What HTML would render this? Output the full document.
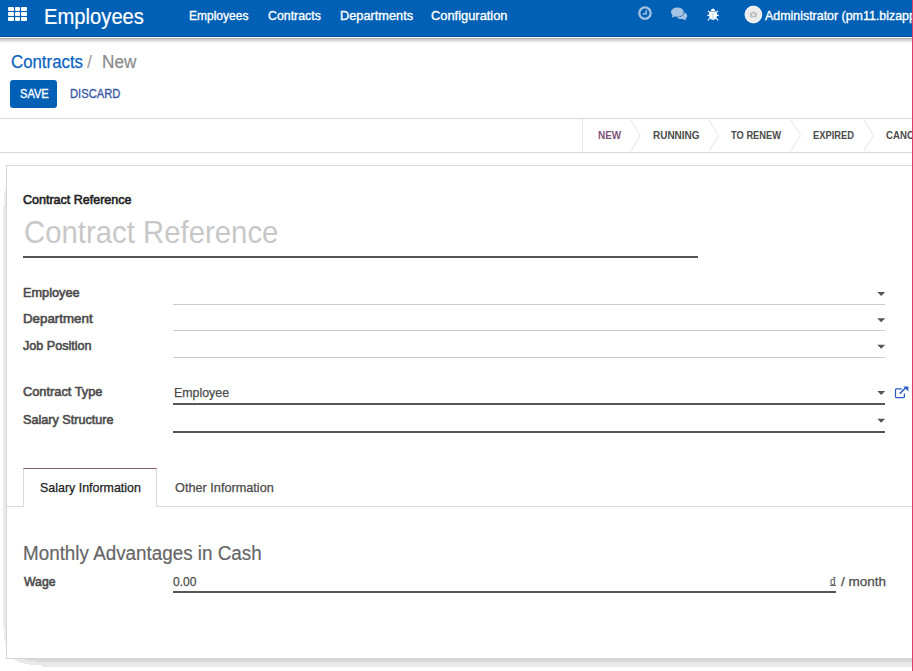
<!DOCTYPE html>
<html><head><meta charset="utf-8">
<style>
html,body{margin:0;padding:0;width:913px;height:671px;overflow:hidden;background:#fff;position:relative;font-family:"Liberation Sans",sans-serif}
.a{position:absolute}
.t{position:absolute;line-height:1;white-space:nowrap;transform-origin:0 0}
.grid i{position:absolute;width:5.5px;height:4.2px;background:#fff;border-radius:1px}
</style></head><body>
<!-- navbar -->
<div class="a" style="left:0;top:0;width:913px;height:36px;background:#0060b6"></div>
<div class="a" style="left:0;top:36px;width:913px;height:1px;background:#0052a6"></div>
<div class="a" style="left:0;top:37px;width:913px;height:1px;background:#fbfaf8"></div>
<div class="a" style="left:0;top:38px;width:913px;height:1px;background:#b3b3b3"></div>
<div class="a" style="left:0;top:39px;width:913px;height:1px;background:#cecece"></div>
<div class="a" style="left:0;top:40px;width:913px;height:1px;background:#d9d9d9"></div>
<div class="a" style="left:0;top:41px;width:913px;height:1px;background:#e8e8e8"></div>
<div class="a" style="left:0;top:42px;width:913px;height:1px;background:#f6f6f6"></div>
<div class="a grid" style="left:0;top:0">
<i style="left:8px;top:6.7px"></i><i style="left:14.6px;top:6.7px"></i><i style="left:21.1px;top:6.7px"></i>
<i style="left:8px;top:11.8px"></i><i style="left:14.6px;top:11.8px"></i><i style="left:21.1px;top:11.8px"></i>
<i style="left:8px;top:16.9px"></i><i style="left:14.6px;top:16.9px"></i><i style="left:21.1px;top:16.9px"></i>
</div>
<svg class="a" style="left:0;top:0" width="913" height="36" viewBox="0 0 913 36">
 <!-- clock -->
 <circle cx="645" cy="13.1" r="5.7" fill="none" stroke="#a6c2e2" stroke-width="2.3"/>
 <path d="M646.2 9.9 V13.8 H642.8" fill="none" stroke="#a6c2e2" stroke-width="1.5"/>
 <!-- chat -->
 <path d="M680 11.6 C684.5 11.8 687.5 14 687.2 16.3 C687 17.8 686 18.6 685.3 19 L686.3 20.2 C684.5 20.1 683.3 19.6 682.4 19.1 C679.6 19.1 677.5 18.4 676.8 17.2 C680.5 17.2 683.6 15.5 683.9 12.8 Z" fill="#a6c2e2"/>
 <ellipse cx="677.4" cy="12.1" rx="6.9" ry="5.2" fill="#0060b6"/>
 <ellipse cx="677.4" cy="12.1" rx="6.4" ry="4.7" fill="#a6c2e2"/>
 <path d="M672.8 14.5 L671.6 17.8 L675.8 15.9 Z" fill="#a6c2e2"/>
 <!-- bug -->
 <path d="M710.8 10.9 C711 9.3 712 8.7 713 8.7 C714 8.7 715 9.3 715.2 10.9 Z" fill="#fff"/>
 <path d="M709.9 11.6 H716.1 C716.8 12.2 717 13.2 717 15 C717 18 715.5 19.9 713 19.9 C710.5 19.9 709 18 709 15 C709 13.2 709.2 12.2 709.9 11.6 Z" fill="#fff"/>
 <path d="M708 11 L709.9 12.6 M718 11 L716.1 12.6 M707.3 15.4 H709.2 M718.7 15.4 H716.8 M707.9 20.3 L709.8 18.2 M718.1 20.3 L716.2 18.2" stroke="#fff" stroke-width="1.1"/>
 <path d="M713 12.5 V19.4" stroke="#0060b6" stroke-width="0.6" opacity="0.5"/>
 <!-- avatar -->
 <circle cx="753.4" cy="14.5" r="8.4" fill="#ececec" stroke="#fff" stroke-width="0.9"/>
 <rect x="750" y="12.6" width="6.8" height="4.6" rx="0.6" fill="#bdbdbd"/>
 <rect x="752" y="11.6" width="2.6" height="1.4" fill="#bdbdbd"/>
 <circle cx="753.4" cy="14.9" r="1.3" fill="#ececec"/>
</svg>

<!-- control panel -->
<div class="a" style="left:10px;top:80px;width:47px;height:28px;background:#0060b6;border-radius:3px"></div>
<div class="a" style="left:0;top:118px;width:913px;height:1px;background:#d9d9d9"></div>
<div class="a" style="left:0;top:152px;width:913px;height:1px;background:#d9d9d9"></div>
<div class="a" style="left:582px;top:119px;width:1px;height:33px;background:#e6e6e6"></div>
<svg class="a" style="left:0;top:119px" width="913" height="33" viewBox="0 119 913 33">
 <path d="M631 120 L640 135.5 L631 151 M709 120 L718.5 135.5 L709 151 M791 120 L800.5 135.5 L791 151 M864 120 L873.5 135.5 L864 151" fill="none" stroke="#e6e6e6" stroke-width="1"/>
</svg>

<!-- sheet -->
<div class="a" style="left:3px;top:206px;width:3px;height:421px;background:#e9e9e9"></div>
<div class="a" style="left:4px;top:192px;width:2px;height:14px;background:#ececec"></div>
<div class="a" style="left:5px;top:188px;width:1px;height:4px;background:#efefef"></div>
<div class="a" style="left:4px;top:627px;width:2px;height:13px;background:#ececec"></div>
<div class="a" style="left:5px;top:640px;width:1px;height:5px;background:#efefef"></div>
<svg class="a" style="left:0;top:650px" width="913" height="21" viewBox="0 650 913 21">
 <polygon points="14,659 912,659 912,667 42,667 42,665 29,665 29,664 24,664 24,663 20,663 20,662 18,662 18,661 16,661 16,660 14,660" fill="#e9e9e9" shape-rendering="crispEdges"/>
 <polygon points="25,659 912,659 912,662 36,662 36,661 29,661 29,660 25,660" fill="#d9d9d9" shape-rendering="crispEdges"/>
</svg>
<div class="a" style="left:6px;top:165px;width:920px;height:494px;box-sizing:border-box;border:1px solid #d6d6d6;background:#fff"></div>

<div class="a" style="left:23px;top:256px;width:675px;height:2px;background:#555"></div>
<div class="a" style="left:173px;top:304px;width:712px;height:1px;background:#cbcbcb"></div>
<div class="a" style="left:173px;top:330px;width:712px;height:1px;background:#cbcbcb"></div>
<div class="a" style="left:173px;top:357px;width:712px;height:1px;background:#cbcbcb"></div>
<div class="a" style="left:173px;top:403px;width:712px;height:2px;background:#555"></div>
<div class="a" style="left:173px;top:431px;width:712px;height:2px;background:#555"></div>
<svg class="a" style="left:0;top:0" width="913" height="671" viewBox="0 0 913 671">
 <path d="M877.2 292 H885.2 L881.2 296 Z M877.2 318.3 H885.2 L881.2 322.3 Z M877.2 344.7 H885.2 L881.2 348.7 Z M877.2 391 H885.2 L881.2 395 Z M877.2 418.8 H885.2 L881.2 422.8 Z" fill="#555"/>
 <!-- external link -->
 <path d="M901.8 388.9 H896.4 Q895.5 388.9 895.5 389.8 V396.8 Q895.5 397.6 896.4 397.6 H903.6 Q904.4 397.6 904.4 396.8 V393.6" fill="none" stroke="#2d5bc8" stroke-width="1.25"/>
 <path d="M899.8 393.6 L906.2 387.2" stroke="#2d5bc8" stroke-width="1.5"/>
 <path d="M903.4 386.4 H908.4 V391.4 Z" fill="#2d5bc8"/>
</svg>

<!-- tabs -->
<div class="a" style="left:7px;top:506px;width:906px;height:1px;background:#d9d9d9"></div>
<div class="a" style="left:23px;top:468px;width:134px;height:39px;box-sizing:border-box;border:1px solid #d9d9d9;border-bottom:none;border-top-color:#875a7b;background:#fff"></div>

<!-- wage -->
<div class="a" style="left:173px;top:591px;width:663px;height:2px;background:#555"></div>

<span class="t" style="left:43.78px;top:6px;font-size:21.75px;font-weight:400;color:#fff;transform:scaleX(0.9291);-webkit-text-stroke:0.2px #fff">Employees</span>
<span class="t" style="left:188.84px;top:9px;font-size:13.0px;font-weight:400;color:#fff;transform:scaleX(0.9237);-webkit-text-stroke:0.35px #fff">Employees</span>
<span class="t" style="left:268.08px;top:9px;font-size:13.0px;font-weight:400;color:#fff;transform:scaleX(0.9491);-webkit-text-stroke:0.35px #fff">Contracts</span>
<span class="t" style="left:339.68px;top:9px;font-size:13.0px;font-weight:400;color:#fff;transform:scaleX(0.9818);-webkit-text-stroke:0.35px #fff">Departments</span>
<span class="t" style="left:430.96px;top:9px;font-size:13.0px;font-weight:400;color:#fff;transform:scaleX(0.9896);-webkit-text-stroke:0.35px #fff">Configuration</span>
<span class="t" style="left:765.20px;top:9px;font-size:13.0px;font-weight:400;color:#fff;transform:scaleX(0.9550);-webkit-text-stroke:0.35px #fff">Administrator (pm11.bizapps</span>
<span class="t" style="left:10.96px;top:53px;font-size:18.75px;font-weight:400;color:#0a64c0;transform:scaleX(0.8974);-webkit-text-stroke:0.25px #0a64c0">Contracts</span>
<span class="t" style="left:87.00px;top:54px;font-size:17.75px;font-weight:400;color:#9a9a9a;transform:scaleX(1.0000);">/</span>
<span class="t" style="left:101.53px;top:53px;font-size:18.75px;font-weight:400;color:#8a8a8a;transform:scaleX(0.9167);-webkit-text-stroke:0.2px #8a8a8a">New</span>
<span class="t" style="left:19.65px;top:87px;font-size:13.0px;font-weight:400;color:#fff;transform:scaleX(0.8523);-webkit-text-stroke:0.35px #fff">SAVE</span>
<span class="t" style="left:69.60px;top:87px;font-size:13.0px;font-weight:400;color:#3a5aa8;transform:scaleX(0.8625);-webkit-text-stroke:0.35px #3a5aa8">DISCARD</span>
<span class="t" style="left:597.91px;top:130px;font-size:11.0px;font-weight:700;color:#7c527a;transform:scaleX(0.9010);">NEW</span>
<span class="t" style="left:653.00px;top:130px;font-size:11.0px;font-weight:700;color:#4c4c4c;transform:scaleX(0.9071);">RUNNING</span>
<span class="t" style="left:730.91px;top:130px;font-size:11.0px;font-weight:700;color:#4c4c4c;transform:scaleX(0.8480);">TO RENEW</span>
<span class="t" style="left:812.95px;top:130px;font-size:11.0px;font-weight:700;color:#4c4c4c;transform:scaleX(0.8496);">EXPIRED</span>
<span class="t" style="left:885.61px;top:130px;font-size:11.0px;font-weight:700;color:#4c4c4c;transform:scaleX(0.8764);">CANCELLED</span>
<span class="t" style="left:22.57px;top:194px;font-size:12.75px;font-weight:400;color:#222;transform:scaleX(0.9808);-webkit-text-stroke:0.6px #222">Contract Reference</span>
<span class="t" style="left:23.83px;top:218px;font-size:30.75px;font-weight:400;color:#c8c8c8;transform:scaleX(0.9540);">Contract Reference</span>
<span class="t" style="left:22.73px;top:286px;font-size:13.0px;font-weight:400;color:#4c4c4c;transform:scaleX(0.9793);-webkit-text-stroke:0.6px #4c4c4c">Employee</span>
<span class="t" style="left:23.43px;top:312px;font-size:13.0px;font-weight:400;color:#4c4c4c;transform:scaleX(1.0251);-webkit-text-stroke:0.6px #4c4c4c">Department</span>
<span class="t" style="left:23.25px;top:339px;font-size:13.0px;font-weight:400;color:#4c4c4c;transform:scaleX(0.9687);-webkit-text-stroke:0.6px #4c4c4c">Job Position</span>
<span class="t" style="left:22.86px;top:385px;font-size:13.0px;font-weight:400;color:#4c4c4c;transform:scaleX(0.9845);-webkit-text-stroke:0.6px #4c4c4c">Contract Type</span>
<span class="t" style="left:22.87px;top:413px;font-size:13.0px;font-weight:400;color:#4c4c4c;transform:scaleX(0.9713);-webkit-text-stroke:0.6px #4c4c4c">Salary Structure</span>
<span class="t" style="left:173.81px;top:387px;font-size:12.5px;font-weight:400;color:#4c4c4c;transform:scaleX(0.9907);-webkit-text-stroke:0.25px #4c4c4c">Employee</span>
<span class="t" style="left:40.28px;top:482px;font-size:12.25px;font-weight:400;color:#222;transform:scaleX(1.0153);-webkit-text-stroke:0.25px #222">Salary Information</span>
<span class="t" style="left:174.67px;top:482px;font-size:12.25px;font-weight:400;color:#4c4c4c;transform:scaleX(1.0366);-webkit-text-stroke:0.25px #4c4c4c">Other Information</span>
<span class="t" style="left:23.49px;top:543px;font-size:20.0px;font-weight:400;color:#666;transform:scaleX(0.9417);-webkit-text-stroke:0.2px #666">Monthly Advantages in Cash</span>
<span class="t" style="left:23.80px;top:575px;font-size:13.0px;font-weight:400;color:#4c4c4c;transform:scaleX(0.9425);-webkit-text-stroke:0.6px #4c4c4c">Wage</span>
<span class="t" style="left:172.72px;top:575px;font-size:13.0px;font-weight:400;color:#4c4c4c;transform:scaleX(0.9255);-webkit-text-stroke:0.25px #4c4c4c">0.00</span>
<span class="t" style="left:841.00px;top:575px;font-size:13.25px;font-weight:400;color:#4c4c4c;transform:scaleX(1.0155);-webkit-text-stroke:0.25px #4c4c4c">/ month</span>
<span class="t" style="left:829.6px;top:576px;font-size:10.5px;color:#4c4c4c;transform:scaleX(0.95)">&#273;</span>
<div class="a" style="left:830px;top:585px;width:6px;height:1px;background:#6a6a6a"></div>
<div class="a" style="left:912px;top:0;width:1px;height:671px;background:#dc3d6b"></div>
</body></html>
